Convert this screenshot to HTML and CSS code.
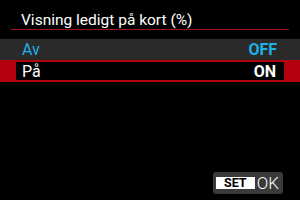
FILE: index.html
```html
<!DOCTYPE html>
<html>
<head>
<meta charset="utf-8">
<link rel="stylesheet" href="styles.css">
</head>
<body>
<div class="screen">
  <div class="title">Visning ledigt på kort (%)</div>
  <div class="list">
    <div class="row current"><span>Av</span><span class="val">OFF</span></div>
    <div class="row selected"><div class="inner"><span>På</span><span class="val">ON</span></div></div>
  </div>
  <div class="footer">
    <div class="setok"><span class="set">SET</span><span class="ok">OK</span></div>
  </div>
</div>
</body>
</html>
```

FILE: styles.css
```css
html, body {
  margin: 0;
  padding: 0;
  background: #000;
}
.screen {
  width: 300px;
  height: 200px;
  display: flex;
  flex-direction: column;
  font-family: Roboto, "Liberation Sans", sans-serif;
  color: #fff;
}
.title {
  margin: 0 11px;
  padding: 11px 0 0 10px;
  height: 18px;
  font-size: 15.5px;
  line-height: 18px;
  border-bottom: 1px solid #a0101c;
}
.list {
  margin-top: 9px;
  display: flex;
  flex-direction: column;
}
.row {
  display: flex;
  justify-content: space-between;
  align-items: center;
  font-size: 16px;
}
.row.current {
  height: 21px;
  background: #2a2a2a;
  color: #1fb1e4;
  padding: 0 23px 0 22px;
}
.row.selected {
  height: 18px;
  background: #b5000f;
  padding: 2px 16px;
}
.inner {
  flex: 1;
  height: 18px;
  background: #000;
  display: flex;
  justify-content: space-between;
  align-items: center;
  padding: 0 8px 0 6px;
}
.val {
  font-weight: bold;
}
.footer {
  margin-top: auto;
  display: flex;
  justify-content: flex-end;
  padding: 0 17px 6px 0;
}
.setok {
  display: flex;
  align-items: center;
  background: #3a3a3a;
  border-radius: 3px;
  padding: 3px 4px 3px 3px;
  height: 16px;
}
.set {
  background: #fff;
  color: #000;
  font-weight: bold;
  font-size: 12.5px;
  line-height: 12px;
  width: 39px;
  text-align: center;
}
.ok {
  font-size: 17px;
  line-height: 16px;
  margin-left: 2px;
  font-weight: 300;
}
```
